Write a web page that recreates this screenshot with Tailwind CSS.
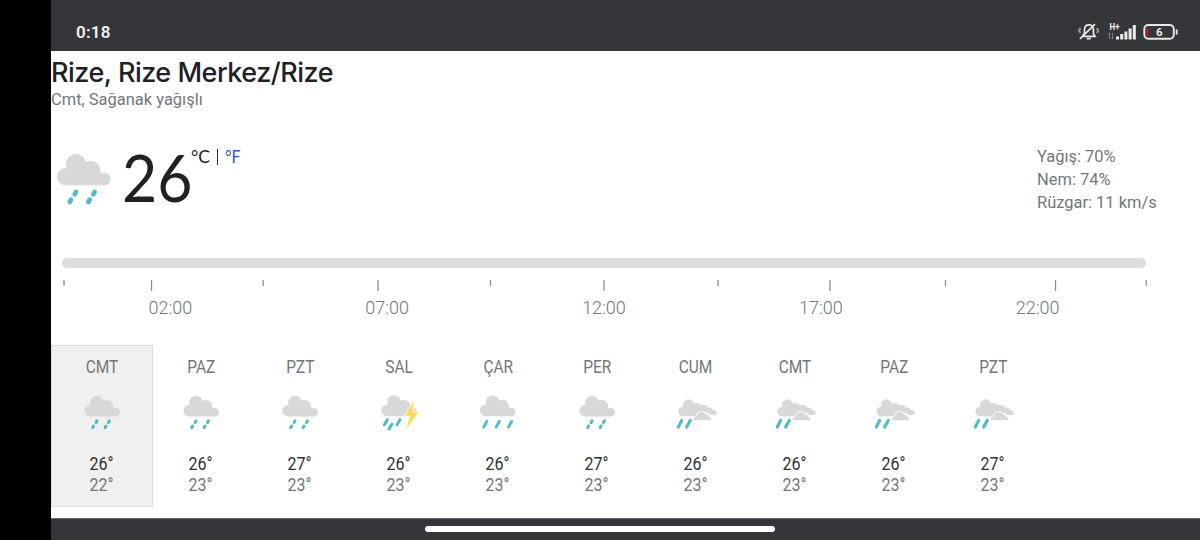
<!DOCTYPE html>
<html lang="tr">
<head>
<meta charset="utf-8">
<title>Hava durumu</title>
<script src="https://cdn.jsdelivr.net/npm/@tailwindcss/browser@4"></script>
</head>
<body class="w-[1200px] h-[540px] overflow-hidden bg-black pl-[51px] font-['Roboto',sans-serif]">
<svg class="hidden">
  <defs>
    <g id="cloud" fill="#d8d8d8"><circle cx="93" cy="89" r="31"/><circle cx="136" cy="109" r="31"/><circle cx="62" cy="126" r="26"/><circle cx="178" cy="133" r="19"/><path d="M62 152V100L93 80L136 90L178 120V152Z"/></g>
    <g id="drizzle" stroke="#52bacb" stroke-width="14" stroke-linecap="round"><path d="M93 172L89 179M78 195L74 202M149 172L145 179M134 195L130 202"/></g>
    <g id="rain" stroke="#52bacb" stroke-width="13" stroke-linecap="round"><path d="M67 175L53 201M123 175L109 201M179 175L165 201"/></g>
    <clipPath id="cutStorm"><path d="M50 30H172L124 109H50Z"/></clipPath>
    <clipPath id="cutScattered"><path d="M345 50H428L396 109H345Z"/></clipPath>
  </defs>
</svg>
<div class="flex h-full w-[1149px] flex-col bg-white">
  <header class="flex h-[51px] shrink-0 items-start justify-between bg-[#353639] pl-[25px] pr-[20px] pt-[22px]">
    <span class="text-[17px]/[21px] font-semibold text-[#f1f1f1] tracking-[0.2px]">0:18</span>
    <svg class="h-[24px] w-[104px] -mt-[2px]" viewBox="0 0 104 24" fill="none" stroke="#e8e8e8">
      <path d="M7 16.300H19L17.400 13.500V9.200C17.400 3.300 8.800 3.300 8.500 9.200V13.200L6.400 16.300M10.800 18.600H14.800M4 18.800L19 4.200" stroke-width="1.700"/>
      <path d="M4.500 8L3 10.500L4.500 13M20.800 8L22.200 10.500L20.800 13" stroke-width="2" stroke="#999"/>
      <g fill="#ededed" stroke="none"><path d="M40 16.500h3v3h-3zM44.200 14h3v5.500h-3zM48.400 11.500h3v8h-3zM52.600 8.500h3v11h-3zM56.800 5h3v14.500h-3z"/></g>
      <path d="M33.500 19V13M32.300 14.500L33.500 13L34.500 14.500M36.500 13V19M35.400 17.500L36.500 19L37.500 17.500" stroke="#888" stroke-width="0.900"/>
      <text x="33.500" y="10" font-family="Roboto" font-size="8.500" font-weight="700" fill="#f3f3f3" stroke="none" textLength="10" lengthAdjust="spacingAndGlyphs">H+</text>
      <rect x="68.300" y="5" width="29.500" height="13.800" rx="4" stroke-width="1.900"/>
      <path d="M71.400 8V16" stroke="#b0182d" stroke-width="2.200"/><path d="M100.700 9.500V14.500" stroke-width="1.900"/>
      <text x="83.200" y="16.200" text-anchor="middle" font-family="Roboto" font-size="11.500" font-weight="600" fill="#f3f3f3" stroke="none">6</text>
    </svg>
  </header>
  <main class="h-[467px] shrink-0">
    <h1 class="h-[37px] pt-[5px] font-['Inter',sans-serif] text-[27px]/[34px] font-medium tracking-[-0.5px] text-[#202124]">Rize, Rize Merkez/Rize</h1>
    <p class="w-fit origin-left scale-x-[0.968] text-[17px]/[22px] text-[#73777b]">Cmt, Sağanak yağışlı</p>
    <section class="flex h-[100px] items-start pl-[6px] pr-[43px] pt-[35px]">
      <svg class="mt-[9px] h-[52px] w-[54px]" viewBox="36 58 162 156"><use href="#cloud"/><use href="#drizzle"/></svg>
      <span class="-mt-px ml-[11px] w-[69px] origin-left scale-x-[0.92] font-['Lato',sans-serif] text-[66px]/[66px] text-[#202124]">26</span>
      <p class="flex pt-px font-['Lato',sans-serif] text-[17.500px]/[22px] text-[#202124]"><span>°C</span><span class="ml-[7px] mt-[3px] h-[16px] w-[1.500px] bg-[#303134]"></span><span class="ml-[7px] origin-left scale-x-[0.9] text-[#2a59c8]">°F</span></p>
      <div class="ml-auto w-[120px] origin-left scale-x-[0.968] whitespace-nowrap text-[17px]/[23px] text-[#73777b]">
        <p>Yağış: 70%</p><p>Nem: 74%</p><p>Rüzgar: 11 km/s</p>
      </div>
    </section>
    <section class="mt-[48px] ml-[11px] w-[1084px]">
      <div class="h-[10px] rounded-full bg-[#dadce0]"></div>
      <svg class="mt-[12px] h-[12px] w-[1090px]" viewBox="62 280 1090 12" stroke="#8c8f93" stroke-width="1.300"><path d="M64 280v6M151.500 280v11M263.200 280v6M378 280v11M490.500 280v6M604 280v11M718 280v6M830 280v11M945.500 280v6M1055.500 280v11M1146.200 280v6"/></svg>
      <div class="mt-[5px] grid grid-cols-5 text-center text-[18px]/[22px] font-light text-[#70757a]"><span>02:00</span><span>07:00</span><span>12:00</span><span>17:00</span><span>22:00</span></div>
    </section>
    <section id="days" class="mt-[26px] flex h-[162px]"></section>
  </main>
  <footer class="flex flex-1 items-start justify-center border-t border-[#68696b] bg-[#353639] pt-[7px] pr-[51px]"><div class="h-[6px] w-[350px] rounded-full bg-white"></div></footer>
</div>
<script>
const small = (x, y, inner) => `<g transform="translate(${x} ${y}) scale(.665) translate(-36 -58)">${inner}</g>`;
const cloud = '<use href="#cloud"/>';
const icons = {
  drizzle: `<svg class="h-[40px] w-[42px]" viewBox="108 159 126 120">${small(118,167, cloud + '<use href="#drizzle"/>')}</svg>`,
  rain: `<svg class="h-[40px] w-[42px]" viewBox="351 39 126 120">${small(360,46, cloud + '<use href="#rain"/>')}</svg>`,
  storm: `<svg class="h-[40px] w-[42px]" viewBox="54 39 126 120"><g clip-path="url(#cutStorm)">${small(64,46,cloud)}</g><path fill="#ffdb5c" stroke="white" stroke-width="4" paint-order="stroke" d="M161 64L134 107H150L139 147L175 97H158Z"/><path stroke="#52bacb" stroke-width="9" stroke-linecap="round" d="M82 119L73 134M96 132L87 147M120 119L111 134"/></svg>`,
  scattered: `<svg class="h-[40px] w-[42px]" viewBox="345 39 126 120"><g clip-path="url(#cutScattered)"><g transform="translate(355 58) scale(.54) translate(-36 -58)">${cloud}</g></g><path fill="#d8d8d8" d="M412 92L419 81C424 72 439 72 444 83C452 82 458 86 460 91C466 91 470 95 470 99C470 103 467 105 464 105H450C444 93 430 88 421 96Z"/><path fill="#d8d8d8" stroke="white" stroke-width="5" paint-order="stroke" d="M401 121C401 115 404 110 410 109C412 94 432 92 438 104C446 104 448 108 448 111C453 112 454 116 454 121Z"/><path stroke="#52bacb" stroke-width="9.500" stroke-linecap="round" d="M365 121L355 141M391 121L380 141"/></svg>`
};
const days = [['CMT','drizzle',26,22],['PAZ','drizzle',26,23],['PZT','drizzle',27,23],['SAL','storm',26,23],['ÇAR','rain',26,23],['PER','drizzle',27,23],['CUM','scattered',26,23],['CMT','scattered',26,23],['PAZ','scattered',26,23],['PZT','scattered',27,23]];
document.getElementById('days').innerHTML = days.map(([name, icon, hi, lo], i) => `
  <div class="${i ? 'w-[99px] border border-transparent' : 'w-[102px] -mr-[1.5px] border border-[#dcdcdc] bg-[#f0f0f0]'} flex shrink-0 flex-col items-center pt-[10px] text-[18px]/[22px]">
    <span class="scale-x-[0.86] text-[#73777b]">${name}</span>
    <div class="mt-[15px] mb-[20px]">${icons[icon]}</div>
    <span class="-ml-px scale-x-[0.89] text-[#303134]">${hi}°</span>
    <span class="-mt-px -ml-px scale-x-[0.89] text-[#73777b]">${lo}°</span>
  </div>`).join('');
</script>
</body>
</html>
